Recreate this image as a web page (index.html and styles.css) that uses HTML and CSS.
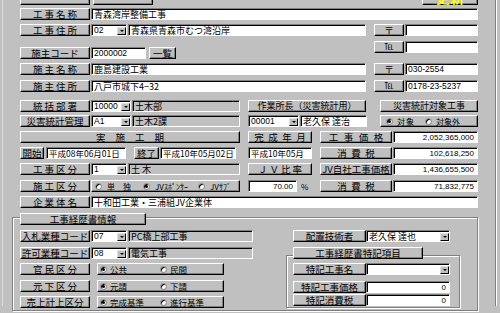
FILE: index.html
```html
<!DOCTYPE html>
<html lang="ja">
<head>
<meta charset="utf-8">
<title>工事台帳</title>
<link rel="stylesheet" href="styles.css">
</head>
<body>
<div class="frame">
  <div class="row top">
    <div class="btn w70"></div>
    <div class="btn w60 ml3"></div>
    <div class="btn update">更新</div>
  </div>

  <div class="row mt3">
    <div class="btn lbl ls2">工事名称</div>
    <div class="field w387">青森湾岸整備工事</div>
  </div>

  <div class="row mt4">
    <div class="btn lbl ls2">工事住所</div>
    <div class="field sel w36"><span class="lat">02</span><span class="arrow"></span></div>
    <div class="field w238 ml1">青森県青森市むつ湾沿岸</div>
    <div class="btn w30 ml8">〒</div>
    <div class="field w73 ml1"></div>
  </div>

  <div class="row pair mt5">
    <div class="pair-left">
      <div class="btn lbl">施主コード</div>
      <div class="field w55"><span class="lat">2000002</span></div>
      <div class="btn w27 ml3">一覧</div>
    </div>
    <div class="pair-right">
      <div class="btn w30 tel">℡</div>
      <div class="field w73 ml1"></div>
    </div>
  </div>

  <div class="row mt4">
    <div class="btn lbl ls2">施主名称</div>
    <div class="field w275">鹿島建設工業</div>
    <div class="btn w30 ml8">〒</div>
    <div class="field w73 ml1"><span class="lat">030-2554</span></div>
  </div>

  <div class="row mt5">
    <div class="btn lbl ls2">施主住所</div>
    <div class="field w275">八戸市城下4−32</div>
    <div class="btn w30 ml8 tel">℡</div>
    <div class="field w73 ml1"><span class="lat">0178-23-5237</span></div>
  </div>

  <div class="row mt8">
    <div class="btn lbl ls2">統括部署</div>
    <div class="field sel w40"><span class="lat">10000</span><span class="arrow"></span></div>
    <div class="field ro w108 ml1">土木部</div>
    <div class="btn w118 ml8 sm">作業所長（災害統計用）</div>
    <div class="btn w98 ml14 sm">災害統計対象工事</div>
  </div>

  <div class="row mt3">
    <div class="btn lbl">災害統計管理</div>
    <div class="field sel w40"><span class="lat">A1</span><span class="arrow"></span></div>
    <div class="field ro w108 ml1">土木2課</div>
    <div class="field sel w51 ml8"><span class="lat">00001</span><span class="arrow"></span></div>
    <div class="field w67 ml1">老久保 達治</div>
    <div class="panel w98 ml13 taisho">
      <span class="radio on"></span><span class="opt ls1">対象</span>
      <span class="radio"></span><span class="opt">対象外</span>
    </div>
  </div>

  <div class="row mt4">
    <div class="btn w220 ls10">実施工期</div>
    <div class="btn w64 ml8 ls4">完成年月</div>
    <div class="btn w72 ml8 ls5">工事価格</div>
    <div class="field num w85 ml1">2,052,365,000</div>
  </div>

  <div class="row mt4">
    <div class="btn w24">開始</div>
    <div class="field date w80 ml2">平成08年06月01日</div>
    <div class="btn w25 ml8">終了</div>
    <div class="field date w76 ml1">平成10年05月02日</div>
    <div class="field date w64 ml12">平成10年05月</div>
    <div class="btn w72 ml8 ls4">消費税</div>
    <div class="field num w85 ml1">102,618,250</div>
  </div>

  <div class="row mt4">
    <div class="btn lbl ls2">工事区分</div>
    <div class="field sel w36"><span class="lat">1</span><span class="arrow"></span></div>
    <div class="field ro w112 ml1">土 木</div>
    <div class="btn w64 ml8 ls2">ＪＶ比率</div>
    <div class="btn w72 ml8">JV自社工事価格</div>
    <div class="field num w85 ml1">1,436,655,500</div>
  </div>

  <div class="row mt5">
    <div class="btn lbl ls2">施工区分</div>
    <div class="panel w149 sekou">
      <span class="radio"></span><span class="opt">単　独</span>
      <span class="radio on"></span><span class="opt">JVｽﾎﾟﾝｻｰ</span>
      <span class="radio"></span><span class="opt">JVｻﾌﾞ</span>
    </div>
    <div class="field num w49 ml8">70.00</div>
    <div class="pct">%</div>
    <div class="btn w72 ls4">消費税</div>
    <div class="field num w85 ml1">71,832,775</div>
  </div>

  <div class="row mt4">
    <div class="btn lbl ls2">企業体名</div>
    <div class="field w387">十和田工業・三浦組JV企業体</div>
  </div>

  <div class="group">
    <div class="btn group-title">工事経歴書情報</div>
    <div class="group-body">
      <div class="col-left">
        <div class="row">
          <div class="btn lbl">入札業種コード</div>
          <div class="field sel w36"><span class="lat">07</span><span class="arrow"></span></div>
          <div class="field ro w125 ml1">PC橋上部工事</div>
        </div>
        <div class="row mt5">
          <div class="btn lbl">許可業種コード</div>
          <div class="field sel w36"><span class="lat">08</span><span class="arrow"></span></div>
          <div class="field ro w125 ml1">電気工事</div>
        </div>
        <div class="row mt4">
          <div class="btn lbl ls2">官民区分</div>
          <div class="panel w127 ml6 kubun">
            <span class="radio on"></span><span class="opt">公共</span>
            <span class="radio"></span><span class="opt">民間</span>
          </div>
        </div>
        <div class="row mt5">
          <div class="btn lbl ls2">元下区分</div>
          <div class="panel w127 ml6 kubun">
            <span class="radio on"></span><span class="opt">元請</span>
            <span class="radio"></span><span class="opt">下請</span>
          </div>
        </div>
        <div class="row mt4">
          <div class="btn lbl">売上計上区分</div>
          <div class="panel w127 ml6 kubun">
            <span class="radio on"></span><span class="opt">完成基準</span>
            <span class="radio"></span><span class="opt">進行基準</span>
          </div>
        </div>
      </div>
      <div class="col-right">
        <div class="row ml7">
          <div class="btn w73">配置技術者</div>
          <div class="field sel w84">老久保 達也<span class="arrow"></span></div>
        </div>
        <div class="inner">
          <div class="btn inner-title">工事経歴書特記項目</div>
          <div class="row ml6 mt4">
            <div class="btn w73">特記工事名</div>
            <div class="field sel w84"><span class="arrow"></span></div>
          </div>
          <div class="row ml6 mt6">
            <div class="btn w73">特記工事価格</div>
            <div class="field num w84">0</div>
          </div>
          <div class="row ml6 mt1">
            <div class="btn w73">特記消費税</div>
            <div class="field num w84">0</div>
          </div>
        </div>
      </div>
    </div>
  </div>
</div>
</body>
</html>
```

FILE: styles.css
```css
* { box-sizing: border-box; }
html, body { margin: 0; padding: 0; }
body {
  width: 500px;
  height: 313px;
  overflow: hidden;
  background: #c0c0c0;
  font-family: "Noto Sans CJK JP", "Noto Sans", sans-serif;
  font-size: 9.5px;
  color: #000;
}

.frame {
  margin-left: 2px;
  width: 494px;
  height: 313px;
  border-left: 1px solid #dcdcdc;
  border-right: 1px solid #808080;
  box-shadow: 1px 0 0 #fff;
  padding: 0 17px;
}

.row { display: flex; height: 12px; }
.top { margin-top: -7px; }
.pair { height: 18px; align-items: flex-start; }
.pair-left { display: flex; height: 12px; margin-top: 6px; }
.pair-right { display: flex; height: 12px; margin-left: auto; }

/* raised push button */
.btn {
  display: flex;
  align-items: center;
  justify-content: center;
  flex: none;
  height: 12px;
  background: #c0c0c0;
  border: 1px solid;
  border-color: #fff #000 #000 #fff;
  box-shadow: inset -1px -1px 0 #808080;
  white-space: nowrap;
  line-height: 10px;
}
.lbl { width: 70px; margin-right: 1px; }
.sm { font-size: 9px; }
.tel { font-size: 9px; }
.update {
  margin-left: auto;
  margin-top: -5px;
  width: 56px;
  height: 17px;
  color: #ffff00;
  font-weight: bold;
  font-size: 14px;
  line-height: 14px;
}

/* sunken text box */
.field {
  display: flex;
  align-items: center;
  flex: none;
  height: 12px;
  background: #fff;
  border: 1px solid;
  border-color: #808080 #fff #fff #808080;
  box-shadow: inset 1px 1px 0 #000;
  padding: 1px 0 0 2px;
  font-size: 9px;
  white-space: nowrap;
  line-height: 9px;
}
.ro { background: #c0c0c0; }
.date { font-size: 8.5px; }
.num {
  justify-content: flex-end;
  padding-right: 3px;
  font-family: "Liberation Sans", sans-serif;
  font-size: 8px;
}
.lat { font-family: "Liberation Sans", sans-serif; font-size: 8.5px; }

.arrow {
  margin-left: auto;
  width: 9px;
  height: 8px;
  flex: none;
  background: #c0c0c0;
  border: 1px solid;
  border-color: #dfdfdf #000 #000 #dfdfdf;
  display: flex;
  align-items: center;
  justify-content: center;
}
.arrow::after {
  content: "";
  border-left: 2px solid transparent;
  border-right: 2px solid transparent;
  border-top: 2px solid #000;
}

.pct {
  width: 23px;
  flex: none;
  padding-left: 4px;
  display: flex;
  align-items: center;
  font-size: 8px;
}

/* raised option panel */
.panel {
  display: grid;
  align-items: center;
  flex: none;
  height: 12px;
  background: #c0c0c0;
  border: 1px solid;
  border-color: #fff #000 #000 #fff;
  box-shadow: inset -1px -1px 0 #808080;
  font-size: 8.5px;
  white-space: nowrap;
  line-height: 9px;
}
.taisho { grid-template-columns: 7px 24px 7px auto; column-gap: 4px; padding-left: 5px; font-size: 8px; }
.sekou { grid-template-columns: 7px 31px 7px 38px 7px auto; column-gap: 5px; padding-left: 3px; font-size: 8px; }
.kubun { grid-template-columns: 7px 47px 7px auto; column-gap: 3px; padding-left: 2px; }

.radio {
  width: 7px;
  height: 7px;
  border-radius: 50%;
  background: #fff;
  border: 1px solid #808080;
  box-shadow: inset 1px 1px 0 #000;
  display: flex;
  align-items: center;
  justify-content: center;
}
.radio.on::after {
  content: "";
  width: 3px;
  height: 3px;
  border-radius: 50%;
  background: #000;
}

/* group boxes */
.group {
  margin-left: -8px;
  margin-top: 9px;
  width: 466px;
  height: 94px;
  border: 1px solid #808080;
  box-shadow: inset 1px 1px 0 #fff, 1px 1px 0 #fff;
}
.group-title { width: 126px; margin-top: -5px; margin-left: 7px; }
.group-body { display: flex; margin-top: 5px; }
.col-left { margin-left: 7px; width: 266px; flex: none; }
.col-right { width: 174px; flex: none; }
.inner {
  margin-top: 13px;
  width: 174px;
  height: 53px;
  border: 1px solid #808080;
  box-shadow: inset 1px 1px 0 #fff, 1px 1px 0 #fff;
}
.inner-title { width: 130px; margin-top: -9px; margin-left: 6px; }

/* letter spacing (padding keeps the text centred) */
.ls1 { letter-spacing: 1px; }
.ls2 { letter-spacing: 2px; padding-left: 2px; }
.ls4 { letter-spacing: 4.5px; padding-left: 4.5px; }
.ls5 { letter-spacing: 5.5px; padding-left: 5.5px; }
.ls10 { letter-spacing: 10px; padding-left: 10px; }

/* spacing */
.mt1 { margin-top: 1px; }
.mt3 { margin-top: 3px; }
.mt4 { margin-top: 4px; }
.mt5 { margin-top: 5px; }
.mt6 { margin-top: 6px; }
.mt8 { margin-top: 8px; }
.ml1 { margin-left: 1px; }
.ml2 { margin-left: 2px; }
.ml3 { margin-left: 3px; }
.ml6 { margin-left: 6px; }
.ml7 { margin-left: 7px; }
.ml8 { margin-left: 8px; }
.ml12 { margin-left: 12px; }
.ml13 { margin-left: 13px; }
.ml14 { margin-left: 14px; }

/* widths */
.w24 { width: 24px; }
.w25 { width: 25px; }
.w27 { width: 27px; }
.w30 { width: 30px; }
.w36 { width: 36px; }
.w40 { width: 40px; }
.w49 { width: 49px; }
.w51 { width: 51px; }
.w55 { width: 55px; }
.w60 { width: 60px; }
.w64 { width: 64px; }
.w67 { width: 67px; }
.w70 { width: 70px; }
.w72 { width: 72px; }
.w73 { width: 73px; }
.w76 { width: 76px; }
.w80 { width: 80px; }
.w84 { width: 84px; }
.w85 { width: 85px; }
.w98 { width: 98px; }
.w108 { width: 108px; }
.w112 { width: 112px; }
.w118 { width: 118px; }
.w125 { width: 125px; }
.w127 { width: 127px; }
.w149 { width: 149px; }
.w220 { width: 220px; }
.w238 { width: 238px; }
.w275 { width: 275px; }
.w387 { width: 387px; }
```
